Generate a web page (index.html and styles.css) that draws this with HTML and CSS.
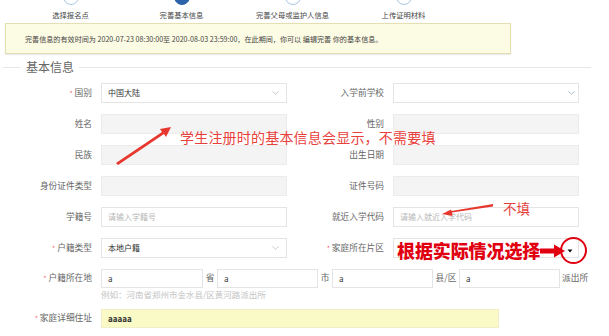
FILE: index.html
```html
<!DOCTYPE html>
<html lang="zh-CN">
<head>
<meta charset="utf-8">
<title>完善基本信息</title>
<link rel="stylesheet" href="styles.css">
</head>
<body>
<div class="page">
  <div class="steps">
    <div class="step"><span class="dot"></span><span class="step-label">选择报名点</span></div>
    <div class="step active"><span class="dot"></span><span class="step-label">完善基本信息</span></div>
    <div class="step"><span class="dot"></span><span class="step-label">完善父母或监护人信息</span></div>
    <div class="step"><span class="dot"></span><span class="step-label">上传证明材料</span></div>
  </div>

  <div class="notice">完善信息的有效时间为 2020-07-23 08:30:00至 2020-08-03 23:59:00，在此期间，你可以 编辑完善 你的基本信息。</div>

  <div class="section-head"><span class="section-title">基本信息</span></div>

  <div class="form">
    <div class="row">
      <div class="field">
        <label class="lbl"><span class="req">*</span> 国别</label>
        <div class="inp"><span class="val">中国大陆</span><svg class="chev" width="7" height="4" viewBox="0 0 7 4"><polyline points="0.5,0.5 3.5,3.2 6.5,0.5" fill="none" stroke="#c4c4c4" stroke-width="0.9"/></svg></div>
      </div>
      <div class="field">
        <label class="lbl">入学前学校</label>
        <div class="inp"><span class="val"></span><svg class="chev chev-r" width="7" height="4" viewBox="0 0 7 4"><polyline points="0.5,0.5 3.5,3.2 6.5,0.5" fill="none" stroke="#9fb4c8" stroke-width="0.9"/></svg></div>
      </div>
    </div>
    <div class="row">
      <div class="field"><label class="lbl">姓名</label><div class="inp dis"></div></div>
      <div class="field"><label class="lbl">性别</label><div class="inp dis"></div></div>
    </div>
    <div class="row">
      <div class="field"><label class="lbl">民族</label><div class="inp dis"></div></div>
      <div class="field"><label class="lbl">出生日期</label><div class="inp dis"></div></div>
    </div>
    <div class="row">
      <div class="field"><label class="lbl">身份证件类型</label><div class="inp dis"></div></div>
      <div class="field"><label class="lbl">证件号码</label><div class="inp dis"></div></div>
    </div>
    <div class="row">
      <div class="field"><label class="lbl">学籍号</label><div class="inp"><span class="ph">请输入学籍号</span></div></div>
      <div class="field"><label class="lbl">就近入学代码</label><div class="inp"><span class="ph">请输入就近入学代码</span></div></div>
    </div>
    <div class="row">
      <div class="field">
        <label class="lbl"><span class="req">*</span> 户籍类型</label>
        <div class="inp"><span class="val">本地户籍</span><svg class="chev" width="7" height="4" viewBox="0 0 7 4"><polyline points="0.5,0.5 3.5,3.2 6.5,0.5" fill="none" stroke="#c4c4c4" stroke-width="0.9"/></svg></div>
      </div>
      <div class="field">
        <label class="lbl"><span class="req">*</span> 家庭所在片区</label>
        <div class="inp"></div>
      </div>
    </div>
    <div class="row row-addr">
      <label class="lbl"><span class="req">*</span> 户籍所在地</label>
      <div class="inp sm first"><span class="val">a</span></div>
      <span class="unit">省</span>
      <div class="inp sm"><span class="val">a</span></div>
      <span class="unit">市</span>
      <div class="inp sm"><span class="val">a</span></div>
      <span class="unit unit-w">县/区</span>
      <div class="inp sm"><span class="val">a</span></div>
      <span class="unit unit-last">派出所</span>
    </div>
    <div class="hint">例如：河南省郑州市金水县/区黄河路派出所</div>
    <div class="row row-home">
      <label class="lbl"><span class="req">*</span> 家庭详细住址</label>
      <div class="inp wide yellow"><span class="val strong">aaaaa</span></div>
    </div>
  </div>

  <svg class="overlay" width="609" height="336" viewBox="0 0 609 336">
    <polygon points="116,163 118,165 164,134 166,137 171,127 160,129 162,132" fill="#e8372e"/>
    <polygon points="493,204 493,206.5 452,212.5 452.5,216 442,214 451,209.5 451.5,211" fill="#e8372e"/>
    <rect x="540" y="248.5" width="16" height="5" fill="#e10010"/>
    <polygon points="554,244.5 565,251 554,257.5" fill="#e10010"/>
    <circle cx="573.5" cy="250.5" r="12.5" fill="none" stroke="#e10010" stroke-width="2"/>
    <polygon points="567.5,249.5 572.5,249.5 570,252.5" fill="#111"/>
  </svg>
  <div class="note note-1">学生注册时的基本信息会显示，不需要填</div>
  <div class="note note-2">不填</div>
  <div class="note note-3">根据实际情况选择</div>
</div>
</body>
</html>
```

FILE: styles.css
```css
html, body {
  margin: 0;
  padding: 0;
  background: #fff;
}
.page {
  position: relative;
  width: 609px;
  height: 336px;
  overflow: hidden;
  font-family: "Noto Sans CJK SC", "Noto Sans", sans-serif;
  color: #333;
}
.steps {
  display: flex;
  padding-left: 15px;
  height: 20px;
}
.step {
  width: 111px;
  display: flex;
  flex-direction: column;
  align-items: center;
}
.dot {
  display: block;
  width: 14px;
  height: 14px;
  border: 1px solid #a9c8e8;
  border-radius: 50%;
  margin-top: -11px;
  background: #fff;
}
.step.active .dot {
  background: #2c62a8;
  border-color: #2c62a8;
}
.step-label {
  margin-top: 5px;
  font-size: 7.3px;
  line-height: 10px;
  color: #444;
  white-space: nowrap;
}
.notice {
  margin: 3px 0 0 5px;
  width: 506px;
  height: 31px;
  box-sizing: border-box;
  border: 1px solid #e4dfb0;
  background: #fcfbe3;
  box-shadow: 0 1px 1px rgba(0,0,0,0.08);
  display: flex;
  align-items: center;
  padding-left: 19px;
  font-size: 7.1px;
  color: #444;
  white-space: nowrap;
}
.section-head {
  margin-top: 6px;
  height: 14px;
  display: flex;
  align-items: center;
}
.section-head::before {
  content: "";
  display: block;
  width: 17px;
  height: 1px;
  margin-left: 3px;
  background: #e6e6e6;
}
.section-head::after {
  content: "";
  display: block;
  width: 512px;
  height: 1px;
  background: #e6e6e6;
}
.section-title {
  margin: 0 5px 0 6px;
  font-size: 12px;
  line-height: 14px;
  color: #666;
}
.form {
  margin-top: 9px;
}
.row {
  display: flex;
  align-items: center;
  height: 20px;
  margin-bottom: 11px;
}
.field {
  display: flex;
  align-items: center;
}
.field + .field {
  margin-left: 5px;
}
.lbl {
  width: 92px;
  text-align: right;
  font-size: 8.7px;
  line-height: 1;
  color: #666;
  white-space: nowrap;
  flex: none;
}
.req {
  color: #f26d6d;
  font-size: 7px;
}
.inp {
  margin-left: 9px;
  width: 186px;
  height: 20px;
  box-sizing: border-box;
  border: 1px solid #e4e4e4;
  background: #fff;
  display: flex;
  align-items: center;
  justify-content: space-between;
  padding: 0 6px 0 6px;
  font-size: 8px;
  line-height: 1;
  flex: none;
}
.inp.dis {
  background: #f4f4f4;
  border-color: #ececec;
}
.val {
  color: #333;
}
.val.strong {
  font-weight: 600;
}
.ph {
  color: #b8b8b8;
}
.chev {
  display: block;
  margin-right: 1px;
}
.chev-r {
  margin-right: -3px;
}
.row-addr {
  height: 19px;
  margin-bottom: 0;
}
.inp.sm {
  margin-left: 0;
  width: 101px;
  height: 19px;
}
.inp.sm.first {
  margin-left: 9px;
  width: 102px;
}
.unit {
  width: 14px;
  text-align: center;
  font-size: 8.7px;
  line-height: 1;
  color: #666;
  flex: none;
}
.unit-w {
  width: 26px;
}
.unit-last {
  width: auto;
  margin-left: 2px;
}
.hint {
  margin-left: 101px;
  font-size: 8.5px;
  line-height: 12px;
  color: #c4c4c4;
}
.row-home {
  margin-top: 9px;
  height: 19px;
}
.inp.wide {
  width: 398px;
  height: 19px;
}
.inp.yellow {
  background: #fafac6;
  border-color: #f0f0c8;
}
.overlay {
  position: absolute;
  left: 0;
  top: 0;
  pointer-events: none;
}
.note {
  position: absolute;
  white-space: nowrap;
  line-height: 1;
}
.note-1 {
  left: 180px;
  top: 130px;
  font-size: 14px;
  letter-spacing: 0.2px;
  color: #e8413c;
}
.note-2 {
  left: 503px;
  top: 202px;
  font-size: 13.5px;
  color: #e8413c;
}
.note-3 {
  left: 397px;
  top: 241px;
  font-size: 18px;
  font-weight: 900;
  color: #e10010;
  letter-spacing: -0.1px;
}
```
